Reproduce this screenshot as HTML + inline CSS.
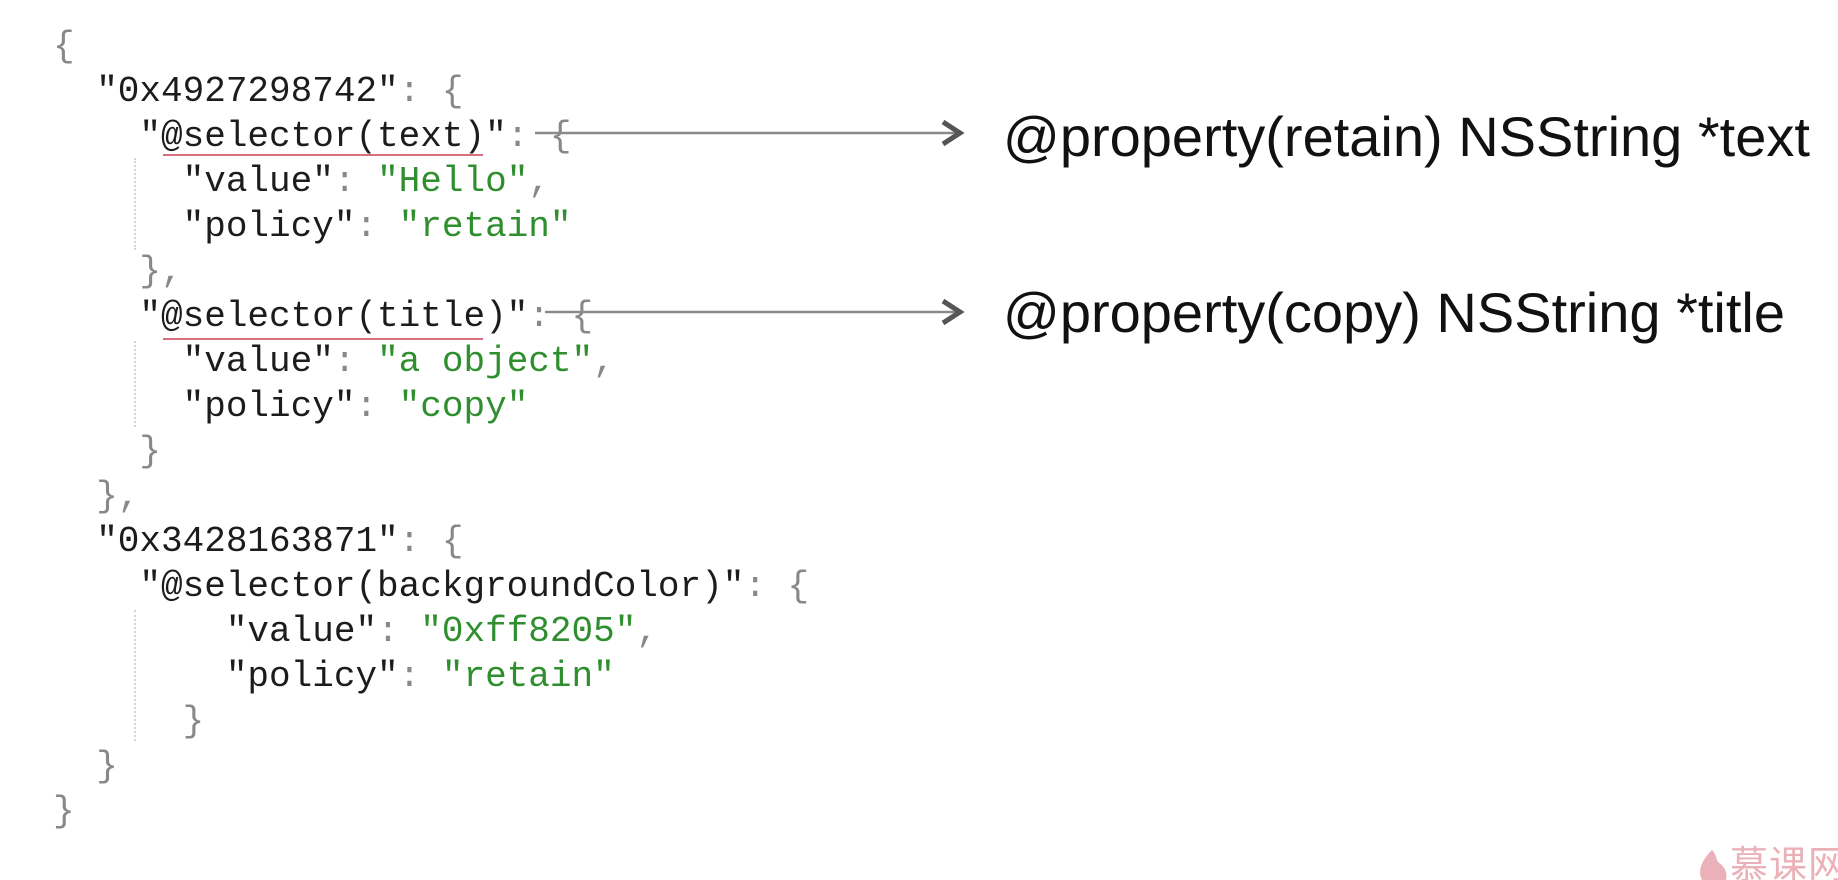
<!DOCTYPE html>
<html><head><meta charset="utf-8"><style>
html,body{margin:0;padding:0;background:#fff;width:1838px;height:880px;overflow:hidden;position:relative}
pre{position:absolute;left:53px;top:24px;margin:0;font-family:"Liberation Mono",monospace;font-size:36px;line-height:45px;color:#1c1c1c}
.p{color:#888}
.s{color:#2f8f2f}
.ul{position:absolute;height:2px;background:#d9707f}
.g{position:absolute;left:134px;width:0;border-left:2px dotted #d4d4d4}
.r{position:absolute;left:1003px;font-family:"Liberation Sans",Arial,sans-serif;font-size:56px;line-height:56px;color:#111;white-space:nowrap}
.wm{position:absolute;left:1730px;top:846px;font-family:"Liberation Sans","Noto Sans CJK SC",sans-serif;font-size:38px;line-height:40px;color:#eab1b8;white-space:nowrap;letter-spacing:1px}
</style></head><body>
<div class="g" style="top:158px;height:92px"></div>
<div class="g" style="top:341px;height:86px"></div>
<div class="g" style="top:610px;height:131px"></div>
<pre><span class="p">{</span>
  "0x4927298742"<span class="p">: {</span>
    "@selector(text)"<span class="p">: {</span>
      "value"<span class="p">:</span> <span class="s">"Hello"</span><span class="p">,</span>
      "policy"<span class="p">:</span> <span class="s">"retain"</span>
    <span class="p">},</span>
    "@selector(title)"<span class="p">: {</span>
      "value"<span class="p">:</span> <span class="s">"a object"</span><span class="p">,</span>
      "policy"<span class="p">:</span> <span class="s">"copy"</span>
    <span class="p">}</span>
  <span class="p">},</span>
  "0x3428163871"<span class="p">: {</span>
    "@selector(backgroundColor)"<span class="p">: {</span>
        "value"<span class="p">:</span> <span class="s">"0xff8205"</span><span class="p">,</span>
        "policy"<span class="p">:</span> <span class="s">"retain"</span>
      <span class="p">}</span>
  <span class="p">}</span>
<span class="p">}</span></pre>
<div class="ul" style="left:163px;width:320px;top:154px"></div>
<div class="ul" style="left:163px;width:320px;top:338px"></div>
<svg width="1838" height="880" style="position:absolute;left:0;top:0" xmlns="http://www.w3.org/2000/svg">
<line x1="535" y1="133" x2="958" y2="133" stroke="#8a8a8a" stroke-width="2.5"/>
<polyline points="943,122 960,133 943,144" fill="none" stroke="#555" stroke-width="5"/>
<line x1="545" y1="312" x2="958" y2="312" stroke="#8a8a8a" stroke-width="2.5"/>
<polyline points="943,301 960,312 943,323" fill="none" stroke="#555" stroke-width="5"/>
<path d="M1712 850 C1700 862 1698 872 1702 880 L1726 880 C1728 872 1724 866 1718 862 C1716 858 1716 854 1712 850 Z" fill="#eab1b8"/>
</svg>
<div class="r" style="top:109px">@property(retain) NSString *text</div>
<div class="r" style="top:285px">@property(copy) NSString *title</div>
<div class="wm">慕课网</div>
</body></html>
